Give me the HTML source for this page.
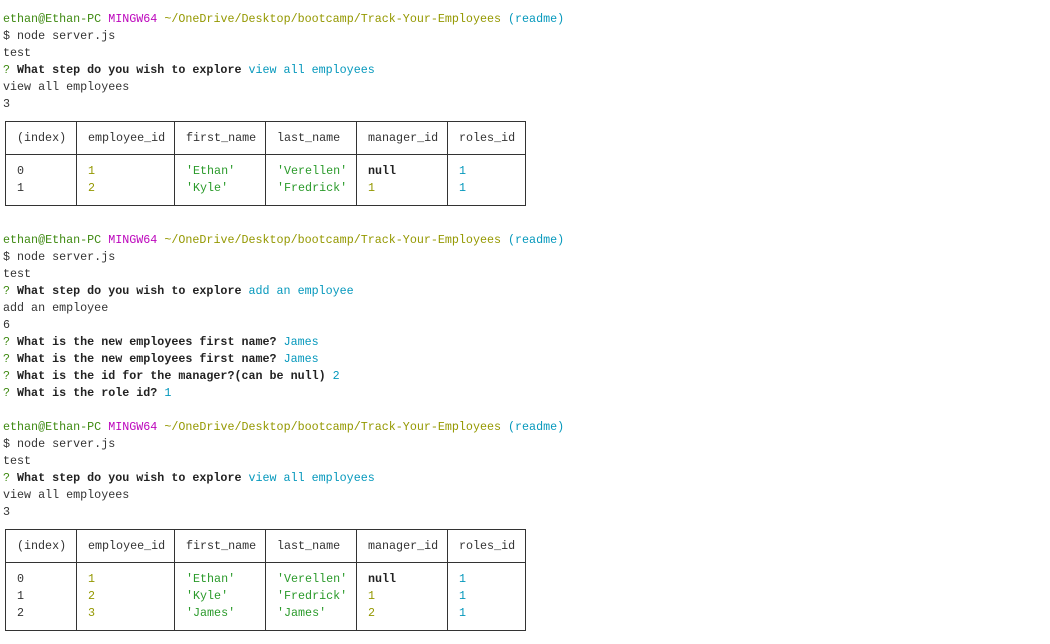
<!DOCTYPE html>
<html><head><meta charset="utf-8"><style>
body{margin:0;width:1050px;height:643px;background:#fff;overflow:hidden;font-family:"Liberation Mono",monospace;font-size:11.7px;color:#333;position:relative}
.l{position:absolute;left:3px;white-space:pre;line-height:17px;height:17px;top:1px}
.g{color:#3f8a12}.m{color:#bc05bc}.y{color:#949800}.c{color:#0598bc}.s{color:#2a9a2a}.b{font-weight:bold;color:#222}
.t{position:absolute;left:5px;border-collapse:collapse;table-layout:fixed;width:520px}
.t td{border:1px solid #333;padding:0 0 0 11px;white-space:pre;vertical-align:top;line-height:17px;overflow:hidden}
.t tr.h td{height:32px;line-height:32px}
.t tr.r td{padding-top:8px;padding-bottom:8px}
</style></head><body>
<div style="position:absolute;left:0;top:1px;width:1050px;height:643px">
<div class="l" style="top:10px"><span class="g">ethan@Ethan-PC</span> <span class="m">MINGW64</span> <span class="y">~/OneDrive/Desktop/bootcamp/Track-Your-Employees</span> <span class="c">(readme)</span></div>
<div class="l" style="top:27px">$ node server.js</div>
<div class="l" style="top:44px">test</div>
<div class="l" style="top:61px"><span class="g">?</span> <span class="b">What step do you wish to explore</span> <span class="c">view all employees</span></div>
<div class="l" style="top:78px">view all employees</div>
<div class="l" style="top:95px">3</div>
<table class="t" style="top:120px">
<colgroup><col style="width:71px"><col style="width:98px"><col style="width:91px"><col style="width:91px"><col style="width:91px"><col style="width:78px"></colgroup>
<tr class="h"><td>(index)</td><td>employee_id</td><td>first_name</td><td>last_name</td><td>manager_id</td><td>roles_id</td></tr>
<tr class="r"><td>0
1</td><td><span class="y">1
2</span></td><td><span class="s">'Ethan'
'Kyle'</span></td><td><span class="s">'Verellen'
'Fredrick'</span></td><td><span class="b">null</span>
<span class="y">1</span></td><td><span class="c">1
1</span></td></tr>
</table>

<div class="l" style="top:231px"><span class="g">ethan@Ethan-PC</span> <span class="m">MINGW64</span> <span class="y">~/OneDrive/Desktop/bootcamp/Track-Your-Employees</span> <span class="c">(readme)</span></div>
<div class="l" style="top:248px">$ node server.js</div>
<div class="l" style="top:265px">test</div>
<div class="l" style="top:282px"><span class="g">?</span> <span class="b">What step do you wish to explore</span> <span class="c">add an employee</span></div>
<div class="l" style="top:299px">add an employee</div>
<div class="l" style="top:316px">6</div>
<div class="l" style="top:333px"><span class="g">?</span> <span class="b">What is the new employees first name?</span> <span class="c">James</span></div>
<div class="l" style="top:350px"><span class="g">?</span> <span class="b">What is the new employees first name?</span> <span class="c">James</span></div>
<div class="l" style="top:367px"><span class="g">?</span> <span class="b">What is the id for the manager?(can be null)</span> <span class="c">2</span></div>
<div class="l" style="top:384px"><span class="g">?</span> <span class="b">What is the role id?</span> <span class="c">1</span></div>

<div class="l" style="top:418px"><span class="g">ethan@Ethan-PC</span> <span class="m">MINGW64</span> <span class="y">~/OneDrive/Desktop/bootcamp/Track-Your-Employees</span> <span class="c">(readme)</span></div>
<div class="l" style="top:435px">$ node server.js</div>
<div class="l" style="top:452px">test</div>
<div class="l" style="top:469px"><span class="g">?</span> <span class="b">What step do you wish to explore</span> <span class="c">view all employees</span></div>
<div class="l" style="top:486px">view all employees</div>
<div class="l" style="top:503px">3</div>
<table class="t" style="top:528px">
<colgroup><col style="width:71px"><col style="width:98px"><col style="width:91px"><col style="width:91px"><col style="width:91px"><col style="width:78px"></colgroup>
<tr class="h"><td>(index)</td><td>employee_id</td><td>first_name</td><td>last_name</td><td>manager_id</td><td>roles_id</td></tr>
<tr class="r"><td>0
1
2</td><td><span class="y">1
2
3</span></td><td><span class="s">'Ethan'
'Kyle'
'James'</span></td><td><span class="s">'Verellen'
'Fredrick'
'James'</span></td><td><span class="b">null</span>
<span class="y">1
2</span></td><td><span class="c">1
1
1</span></td></tr>
</table>
</div>
</body></html>
